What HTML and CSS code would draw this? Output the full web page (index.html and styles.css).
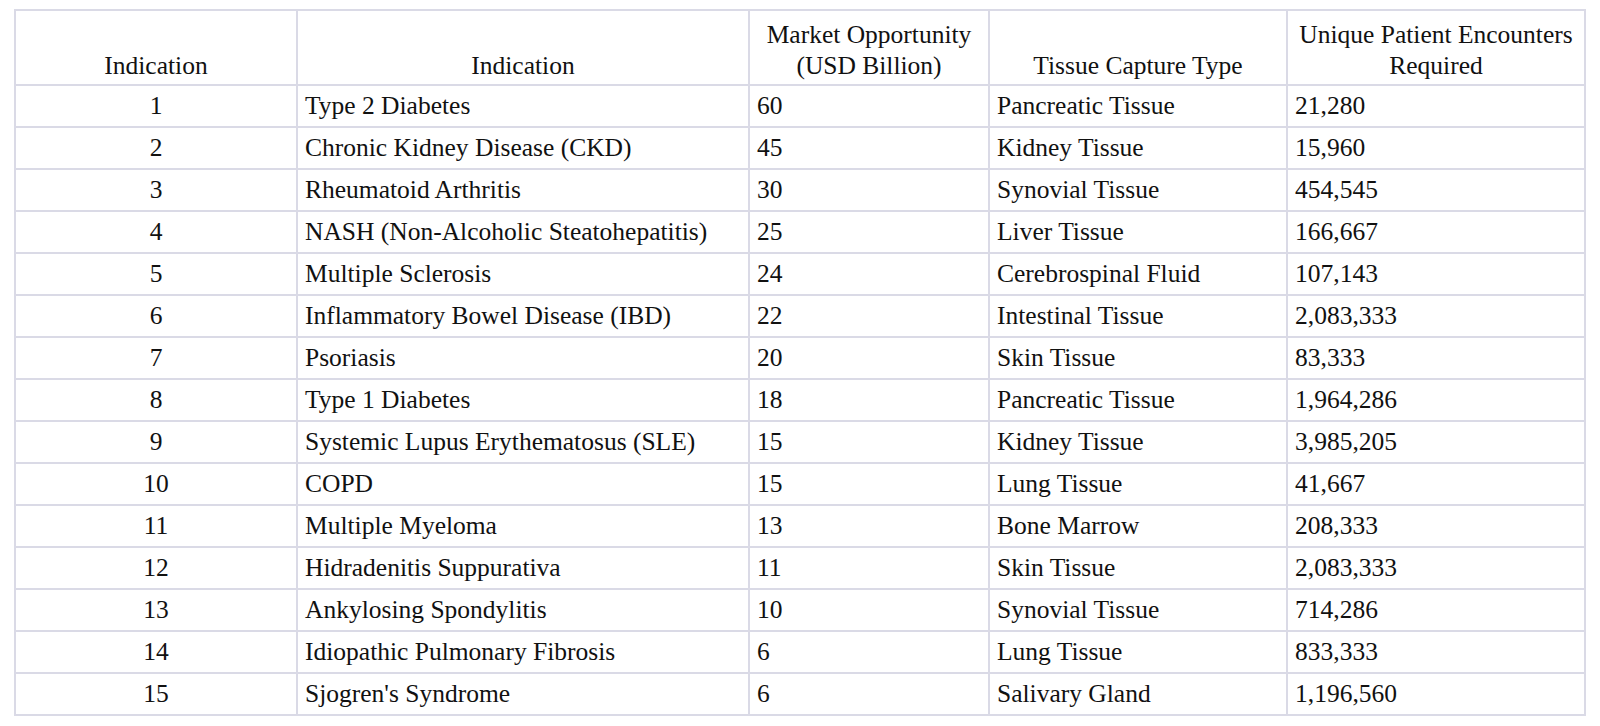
FILE: index.html
```html
<!DOCTYPE html>
<html>
<head>
<meta charset="utf-8">
<link rel="stylesheet" href="styles.css">
</head>
<body>
<table class="data">
  <colgroup>
    <col class="c1"><col class="c2"><col class="c3"><col class="c4"><col class="c5">
  </colgroup>
  <thead>
    <tr>
      <th>Indication</th>
      <th>Indication</th>
      <th>Market Opportunity<br>(USD Billion)</th>
      <th>Tissue Capture Type</th>
      <th>Unique Patient Encounters<br>Required</th>
    </tr>
  </thead>
  <tbody>
    <tr><td class="num">1</td><td>Type 2 Diabetes</td><td>60</td><td>Pancreatic Tissue</td><td>21,280</td></tr>
    <tr><td class="num">2</td><td>Chronic Kidney Disease (CKD)</td><td>45</td><td>Kidney Tissue</td><td>15,960</td></tr>
    <tr><td class="num">3</td><td>Rheumatoid Arthritis</td><td>30</td><td>Synovial Tissue</td><td>454,545</td></tr>
    <tr><td class="num">4</td><td>NASH (Non-Alcoholic Steatohepatitis)</td><td>25</td><td>Liver Tissue</td><td>166,667</td></tr>
    <tr><td class="num">5</td><td>Multiple Sclerosis</td><td>24</td><td>Cerebrospinal Fluid</td><td>107,143</td></tr>
    <tr><td class="num">6</td><td>Inflammatory Bowel Disease (IBD)</td><td>22</td><td>Intestinal Tissue</td><td>2,083,333</td></tr>
    <tr><td class="num">7</td><td>Psoriasis</td><td>20</td><td>Skin Tissue</td><td>83,333</td></tr>
    <tr><td class="num">8</td><td>Type 1 Diabetes</td><td>18</td><td>Pancreatic Tissue</td><td>1,964,286</td></tr>
    <tr><td class="num">9</td><td>Systemic Lupus Erythematosus (SLE)</td><td>15</td><td>Kidney Tissue</td><td>3,985,205</td></tr>
    <tr><td class="num">10</td><td>COPD</td><td>15</td><td>Lung Tissue</td><td>41,667</td></tr>
    <tr><td class="num">11</td><td>Multiple Myeloma</td><td>13</td><td>Bone Marrow</td><td>208,333</td></tr>
    <tr><td class="num">12</td><td>Hidradenitis Suppurativa</td><td>11</td><td>Skin Tissue</td><td>2,083,333</td></tr>
    <tr><td class="num">13</td><td>Ankylosing Spondylitis</td><td>10</td><td>Synovial Tissue</td><td>714,286</td></tr>
    <tr><td class="num">14</td><td>Idiopathic Pulmonary Fibrosis</td><td>6</td><td>Lung Tissue</td><td>833,333</td></tr>
    <tr><td class="num">15</td><td>Sjogren's Syndrome</td><td>6</td><td>Salivary Gland</td><td>1,196,560</td></tr>
  </tbody>
</table>
</body>
</html>
```

FILE: styles.css
```css
html, body {
  margin: 0;
  padding: 0;
  background: #ffffff;
}
body {
  padding: 9px 0 0 14px;
  font-family: "Liberation Serif", "Times New Roman", serif;
  color: #111111;
}
.data {
  border-collapse: collapse;
  table-layout: fixed;
  width: 1570px;
  font-size: 25.5px;
}
.c1 { width: 282px; }
.c2 { width: 452px; }
.c3 { width: 240px; }
.c4 { width: 298px; }
.c5 { width: 298px; }
.data th,
.data td {
  border: 2px solid #dadae6;
  padding: 4px 7px;
  line-height: 32px;
  white-space: nowrap;
  overflow: hidden;
}
.data th {
  font-weight: normal;
  text-align: center;
  vertical-align: bottom;
  line-height: 31px;
  padding: 8px 7px 3px;
}
.data td {
  height: 32px;
  text-align: left;
}
.data td.num {
  text-align: center;
}
```
